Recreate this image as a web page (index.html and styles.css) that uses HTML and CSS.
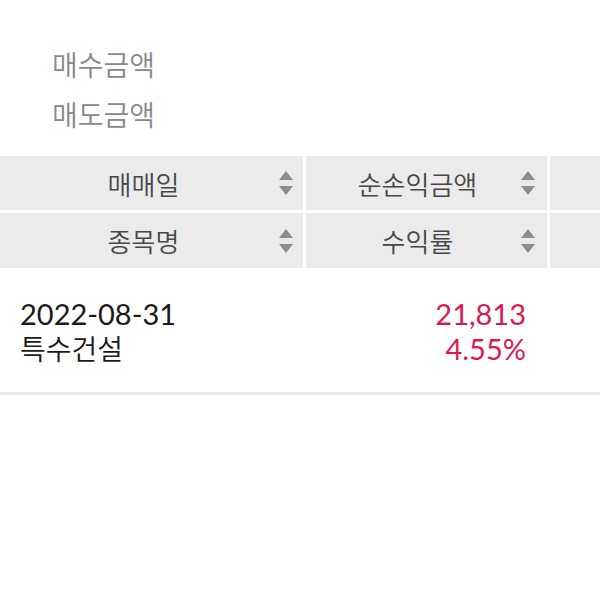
FILE: index.html
```html
<!DOCTYPE html>
<html lang="ko">
<head>
<meta charset="utf-8">
<link rel="stylesheet" href="styles.css">
</head>
<body>
<div class="labels">
  <div class="label">매수금액</div>
  <div class="label">매도금액</div>
</div>
<div class="thead">
  <div class="th"><span class="th-text">매매일</span><svg class="sort" viewBox="0 0 14 24" width="14" height="24"><polygon points="7,0 14,9 0,9"/><polygon points="0,15 14,15 7,24"/></svg></div>
  <div class="th th2"><span class="th-text">순손익금액</span><svg class="sort" viewBox="0 0 14 24" width="14" height="24"><polygon points="7,0 14,9 0,9"/><polygon points="0,15 14,15 7,24"/></svg></div>
  <div class="th th3"></div>
  <div class="th"><span class="th-text">종목명</span><svg class="sort" viewBox="0 0 14 24" width="14" height="24"><polygon points="7,0 14,9 0,9"/><polygon points="0,15 14,15 7,24"/></svg></div>
  <div class="th th2"><span class="th-text">수익률</span><svg class="sort" viewBox="0 0 14 24" width="14" height="24"><polygon points="7,0 14,9 0,9"/><polygon points="0,15 14,15 7,24"/></svg></div>
  <div class="th th3"></div>
</div>
<div class="row">
  <div class="cell c1">
    <div class="num">2022-08-31</div>
    <div class="name">특수건설</div>
  </div>
  <div class="cell c2 up">
    <div class="num">21,813</div>
    <div class="num">4.55%</div>
  </div>
  <div class="cell c3"></div>
</div>
</body>
</html>
```
FILE: styles.css
```css
html, body {
  margin: 0;
  padding: 0;
  background: #ffffff;
  font-family: "Noto Sans CJK KR", "Noto Sans", sans-serif;
}
.labels {
  padding: 39px 0 17px 52px;
}
.label {
  font-size: 28px;
  font-weight: 350;
  line-height: 50px;
  color: #888888;
}
.thead {
  display: grid;
  grid-template-columns: 303px 241px 50px;
  grid-template-rows: 54px 55px;
  column-gap: 3px;
  row-gap: 3px;
}
.th {
  background: #ebebeb;
  display: flex;
  align-items: center;
  padding: 0 10px 0 8px;
  color: #474747;
  font-size: 26px;
  font-weight: 350;
}
.th2 {
  padding-right: 12px;
}
.th3 {
  padding: 0;
}
.th-text {
  flex: 1;
  text-align: center;
}
.sort {
  fill: #8c8c8c;
  display: block;
}
.row {
  display: grid;
  grid-template-columns: 306px 241px 53px;
  border-bottom: 3px solid #e8e8e8;
  height: 127px;
  box-sizing: border-box;
  align-items: start;
  padding-top: 28px;
}
.cell {
  font-size: 28px;
  font-weight: 350;
  line-height: 35px;
  color: #1a1a1a;
}
.c1 {
  padding-left: 20px;
}
.c2 {
  text-align: right;
  padding-right: 21px;
}
.num {
  font-family: "Lato", "Noto Sans CJK KR", sans-serif;
  font-size: 29px;
  font-weight: 400;
}
.up {
  color: #d81b4a;
}
```
